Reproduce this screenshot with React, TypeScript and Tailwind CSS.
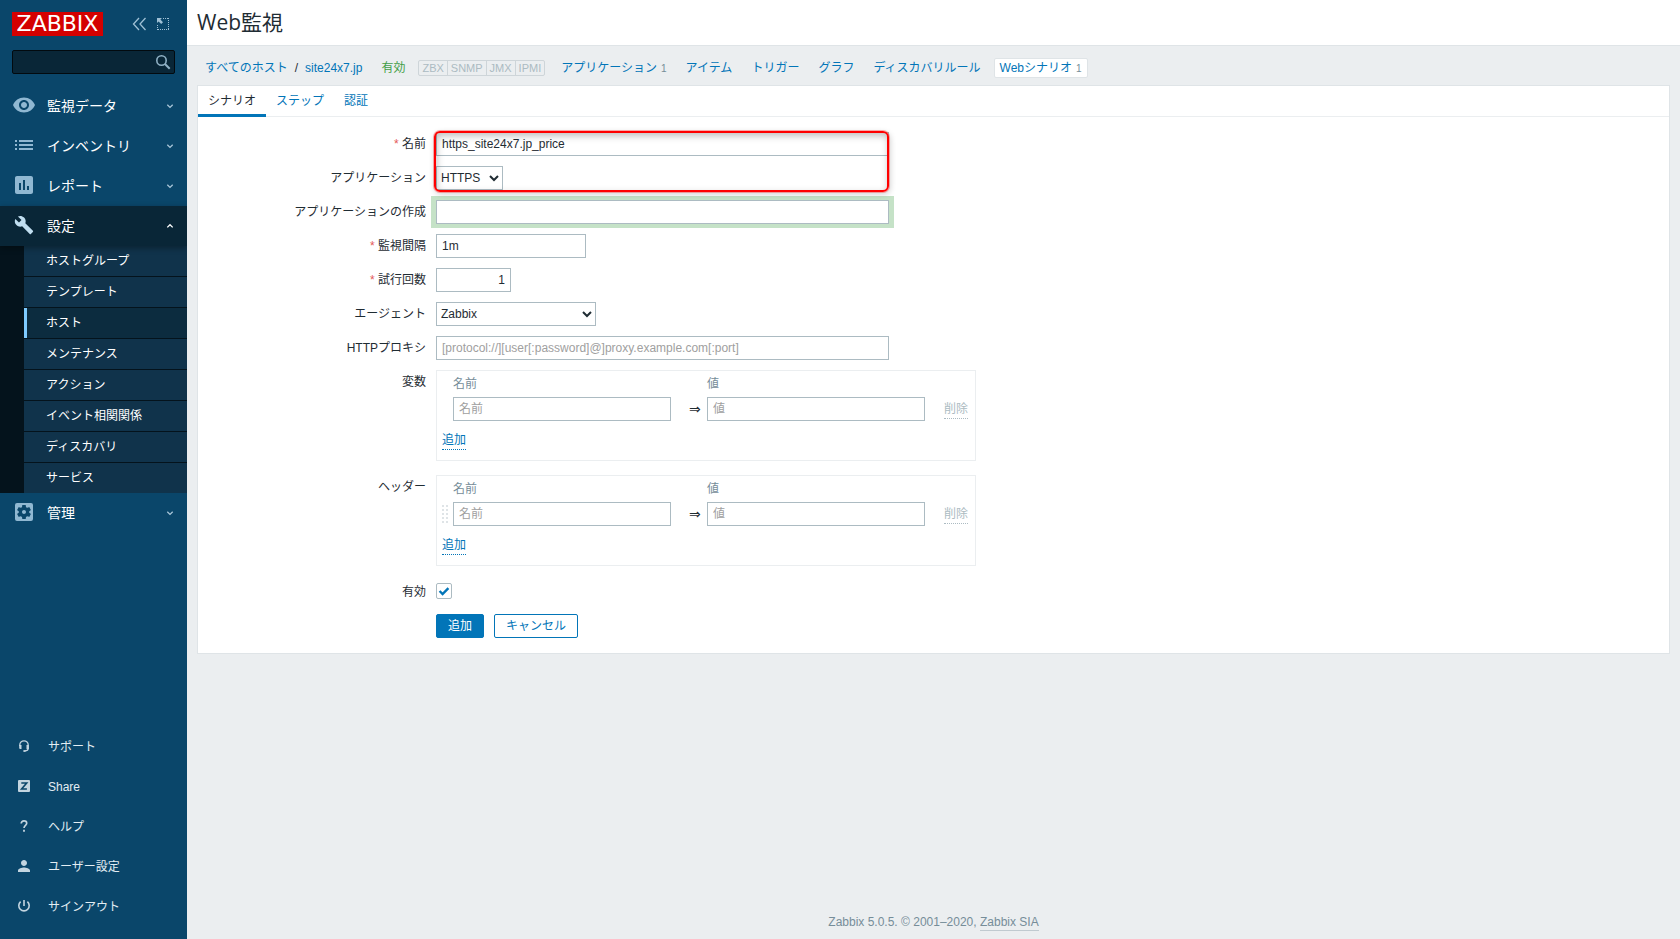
import { useState } from "react";
import type { ComponentType, ReactNode } from "react";
import {
  MdAssessment,
  MdBuild,
  MdList,
  MdPerson,
  MdRemoveRedEye,
  MdSettingsApplications,
} from "react-icons/md";
import clsx from "clsx";

type IconProps = { className?: string };

function HeadsetIcon({ className }: IconProps) {
  return (
    <svg viewBox="0 0 18 18" className={className} fill="none" stroke="currentColor">
      <path d="M4.8 9V8a4.2 4.2 0 0 1 8.4 0v3.6c0 1.6-1.2 2.4-3.4 2.4" strokeWidth="1.3" />
      <path d="M4.2 8h2.3v4H5.3a1.1 1.1 0 0 1-1.1-1.1zM11.5 8h2.3v4h-2.3z" fill="currentColor" stroke="none" />
      <path d="M8.4 14h2" strokeWidth="1.8" />
    </svg>
  );
}

function ShareIcon({ className }: IconProps) {
  return (
    <svg viewBox="0 0 18 18" className={className}>
      <rect x="3" y="3" width="12" height="12" rx="1" fill="currentColor" />
      <path d="M6.3 6h5.4L6.6 12h5.3" fill="none" stroke="#0a466a" strokeWidth="1.6" />
    </svg>
  );
}

function HelpIcon({ className }: IconProps) {
  return (
    <svg viewBox="0 0 18 18" className={className} fill="none" stroke="currentColor" strokeWidth="1.7">
      <path d="M6.2 6.6C6.2 4.8 7.4 3.9 9 3.9s2.7.9 2.7 2.3c0 2-2.7 2.2-2.7 4.8" />
      <path d="M8.1 13.8h1.8" strokeWidth="1.9" />
    </svg>
  );
}

function PowerIcon({ className }: IconProps) {
  return (
    <svg viewBox="0 0 18 18" className={className} fill="none" stroke="currentColor" strokeWidth="1.6">
      <path d="M9 3v6M5.6 4.7a5.2 5.2 0 1 0 6.8 0" />
    </svg>
  );
}

function Chevron({ up }: { up?: boolean }) {
  return (
    <svg viewBox="0 0 8 8" className="size-2" fill="none" stroke="currentColor" strokeWidth="1.3">
      {up ? <path d="M1.3 5.4 4 2.7l2.7 2.7" /> : <path d="M1.3 2.7 4 5.4l2.7-2.7" />}
    </svg>
  );
}

const mainMenu: { name: string; icon: ComponentType<IconProps>; items?: string[] }[] = [
  { name: "監視データ", icon: MdRemoveRedEye },
  { name: "インベントリ", icon: MdList },
  { name: "レポート", icon: MdAssessment },
  {
    name: "設定",
    icon: MdBuild,
    items: [
      "ホストグループ",
      "テンプレート",
      "ホスト",
      "メンテナンス",
      "アクション",
      "イベント相関関係",
      "ディスカバリ",
      "サービス",
    ],
  },
  { name: "管理", icon: MdSettingsApplications },
];

const userMenu = [
  { name: "サポート", icon: HeadsetIcon },
  { name: "Share", icon: ShareIcon },
  { name: "ヘルプ", icon: HelpIcon },
  { name: "ユーザー設定", icon: MdPerson },
  { name: "サインアウト", icon: PowerIcon },
];

const hostLinks = [
  { name: "アプリケーション", count: 1 },
  { name: "アイテム" },
  { name: "トリガー" },
  { name: "グラフ" },
  { name: "ディスカバリルール" },
  { name: "Webシナリオ", count: 1, active: true },
];

function Sidebar() {
  return (
    <aside className="flex w-[187px] shrink-0 flex-col overflow-hidden bg-[#0a466a] text-white">
      <div className="flex h-[50px] items-start pt-3 pr-[17px] pl-3 text-[#9fc0d5]">
        <a href="#" className="flex h-6 w-[91px] items-center justify-center bg-[#d40000] font-['DejaVu_Sans'] text-[22px] leading-6 text-white">
          ZABBIX
        </a>
        <button type="button" aria-label="Collapse sidebar" className="ml-auto">
          <svg viewBox="0 0 16 16" className="mt-1 size-4" fill="none" stroke="currentColor" strokeWidth="1.3">
            <path d="M7 2 1.5 8 7 14M13.500 2 8 8l5.500 6" />
          </svg>
        </button>
        <button type="button" aria-label="Hide sidebar" className="ml-2">
          <svg viewBox="0 0 14 14" className="mt-[5px] size-3.5" fill="none" stroke="currentColor">
            <path d="M7 1.5h6M12.5 1v12M13 12.5H1M1.5 13V7" strokeDasharray="1 1" />
            <path d="M1 1h5L4.400 2.600 7 5.200 5.200 7 2.600 4.400 1 6z" fill="currentColor" stroke="none" />
          </svg>
        </button>
      </div>

      <form className="mx-3 mb-3 flex h-6 items-center rounded-xs border border-[#020a0f] bg-[#092637]">
        <input aria-label="Search" className="h-full w-0 flex-1 bg-transparent px-1.5 text-xs text-white outline-none" />
        <button type="button" aria-label="Search" className="pr-[3px] text-[#8fb0c4]">
          <svg viewBox="0 0 16 16" className="size-4" fill="none" stroke="currentColor" strokeWidth="1.6">
            <circle cx="6.5" cy="6.5" r="4.7" />
            <path d="m10 10 4.700 4.700" strokeWidth="2" />
          </svg>
        </button>
      </form>

      <nav>
        {mainMenu.map((item) => (
          <div key={item.name}>
            <a
              href="#"
              className={clsx(
                "flex h-10 items-center gap-[11px] pr-[13px] pl-3 text-sm",
                item.items && "relative bg-[#092637] shadow-[0_2px_6px_rgba(0,0,0,0.35)]"
              )}
            >
              <span className="mb-0.5 flex size-6 items-center justify-center">
                <item.icon className={item.items ? "size-5 text-[#c0def0]" : "size-6 text-[#90b8d2]"} />
              </span>
              <span className="flex-1">{item.name}</span>
              <span className={item.items ? "text-white" : "text-[#a9c6d8]"}>
                <Chevron up={!!item.items} />
              </span>
            </a>
            {item.items && (
              <ul className="divide-y divide-[#04131c] bg-[#04131c] pl-6">
                {item.items.map((name) => (
                  <li key={name}>
                    <a
                      href="#"
                      className={clsx(
                        "block h-[30px] border-l-3 pl-[19px] text-xs leading-[31px]",
                        name === "ホスト" ? "border-[#7ecbff] bg-[#0c2c3f]" : "border-[#10334b] bg-[#10334b]"
                      )}
                    >
                      {name}
                    </a>
                  </li>
                ))}
              </ul>
            )}
          </div>
        ))}
      </nav>

      <nav className="mt-auto pb-[13px]">
        {userMenu.map((item) => (
          <a key={item.name} href="#" className="flex h-10 items-center gap-[15px] pl-[15px] text-xs text-[#e3edf3]">
            <item.icon className="size-[18px] text-[#c3d5e0]" />
            <span className="pt-0.5">{item.name}</span>
          </a>
        ))}
      </nav>
    </aside>
  );
}

function HostNav() {
  return (
    <nav className="flex h-[39px] items-start gap-[7px] pt-3 pl-2 leading-[19px] text-[#0275b8]">
      <div className="flex h-5 items-center">
        <a href="#">すべてのホスト</a>
        <span className="px-[7px] text-[#1f2c33]">/</span>
        <a href="#">site24x7.jp</a>
        <span className="ml-[19px] text-[#429e47]">有効</span>
        <span className="mr-[3px] ml-[13px] flex divide-x divide-[#ced5d9] rounded-xs border border-[#ced5d9] text-[11px] leading-[14px] text-[#acbbc2]">
          {["ZBX", "SNMP", "JMX", "IPMI"].map((name) => (
            <span key={name} className="px-[3px]">{name}</span>
          ))}
        </span>
      </div>
      {hostLinks.map((link) => (
        <a
          key={link.name}
          href="#"
          className={clsx(
            "h-5 rounded-xs border px-[5px]",
            link.active ? "border-[#dfe4e7] bg-white" : "border-transparent"
          )}
        >
          {link.name}
          {link.count && <sup className="static ml-1 align-baseline text-[10px] text-[#768d99]">{link.count}</sup>}
        </a>
      ))}
    </nav>
  );
}

const field = "h-6 border border-[#acbbc2] bg-white text-[#1f2c33] outline-none placeholder:text-[#a0a0a0]";

function Row({ label, id, required, children }: { label: string; id?: string; required?: boolean; children: ReactNode }) {
  return (
    <div className="flex gap-2.5">
      <label htmlFor={id} className="h-6 w-[228px] shrink-0 text-right leading-[25px]">
        {required && <span className="text-[#e45959]">* </span>}
        {label}
      </label>
      {children}
    </div>
  );
}

function PairTable({ label, draggable }: { label: string; draggable?: boolean }) {
  return (
    <Row label={label}>
      <div className="mb-1 h-[91px] w-[540px] border border-[#ebeef0] pl-[5px]">
        <table className="table-fixed border-collapse text-left">
          <thead>
            <tr className="h-[26px] text-[#768d99]">
              <th className="w-[11px]" />
              <th className="w-[218px] font-normal">名前</th>
              <th className="w-9" />
              <th className="w-[218px] font-normal">値</th>
              <th className="w-[43px]" />
            </tr>
          </thead>
          <tbody>
            <tr>
              <td>
                {draggable && (
                  <svg viewBox="0 0 6 18" className="h-[18px] w-1.5" fill="#dfe4e7">
                    {[0, 4, 8, 12, 16].map((y) => (
                      <g key={y}>
                        <rect x="0" y={y} width="2" height="2" />
                        <rect x="4" y={y} width="2" height="2" />
                      </g>
                    ))}
                  </svg>
                )}
              </td>
              <td>
                <input aria-label={`${label} 名前`} placeholder="名前" className={clsx(field, "block w-full px-[5px]")} />
              </td>
              <td className="pl-[18px] font-['DejaVu_Sans'] text-sm leading-4">⇒</td>
              <td>
                <input aria-label={`${label} 値`} placeholder="値" className={clsx(field, "block w-full px-[5px]")} />
              </td>
              <td className="pl-[19px]">
                <button type="button" disabled className="block border-b border-dotted border-[#acbbc2] leading-[18px] text-[#acbbc2]">
                  削除
                </button>
              </td>
            </tr>
          </tbody>
        </table>
        <button type="button" className="mt-2.5 block border-b border-dotted border-[#0275b8] leading-[18px] text-[#0275b8]">
          追加
        </button>
      </div>
    </Row>
  );
}

function ScenarioForm() {
  const [name, setName] = useState("https_site24x7.jp_price");
  const [delay, setDelay] = useState("1m");
  const [retries, setRetries] = useState("1");
  const [enabled, setEnabled] = useState(true);

  return (
    <form className="flex flex-col gap-2.5 py-[15px] text-[#1f2c33]">
      <div className="relative flex flex-col gap-2.5">
        <Row label="名前" id="name" required>
          <input id="name" value={name} onChange={(e) => setName(e.target.value)} className={clsx(field, "w-[453px] px-[5px]")} />
        </Row>
        <Row label="アプリケーション" id="application">
          <select id="application" className={clsx(field, "w-[67px]")}>
            <option>HTTPS</option>
          </select>
        </Row>
        {/* highlight over the first two fields */}
        <div className="pointer-events-none absolute -top-px left-[236px] h-[61px] w-[455px] rounded-md border-2 border-[#ff0000] shadow-[0_0_0_1px_rgba(255,60,60,0.4),1px_2px_6px_rgba(0,0,0,0.2),inset_1px_3px_7px_rgba(0,0,0,0.25)]" />
      </div>
      <Row label="アプリケーションの作成" id="new-application">
        <input
          id="new-application"
          className={clsx(field, "w-[453px] px-[5px] shadow-[1px_0_0_4px_#c5e2c7,-1px_0_0_4px_#c5e2c7]")}
        />
      </Row>
      <Row label="監視間隔" id="delay" required>
        <input id="delay" value={delay} onChange={(e) => setDelay(e.target.value)} className={clsx(field, "w-[150px] px-[5px]")} />
      </Row>
      <Row label="試行回数" id="retries" required>
        <input
          id="retries"
          value={retries}
          onChange={(e) => setRetries(e.target.value)}
          className={clsx(field, "w-[75px] px-[5px] text-right")}
        />
      </Row>
      <Row label="エージェント" id="agent">
        <select id="agent" className={clsx(field, "w-40")}>
          <option>Zabbix</option>
        </select>
      </Row>
      <Row label="HTTPプロキシ" id="proxy">
        <input
          id="proxy"
          placeholder="[protocol://][user[:password]@]proxy.example.com[:port]"
          className={clsx(field, "w-[453px] px-[5px]")}
        />
      </Row>
      <PairTable label="変数" />
      <PairTable label="ヘッダー" draggable />
      <Row label="有効" id="enabled">
        <span className="relative mt-[3px] mb-[5px] size-4">
          <input
            id="enabled"
            type="checkbox"
            checked={enabled}
            onChange={(e) => setEnabled(e.target.checked)}
            className="block size-4 appearance-none rounded-xs border border-[#acbbc2] bg-white"
          />
          {enabled && (
            <svg viewBox="0 0 16 16" className="pointer-events-none absolute inset-0 size-4" fill="none" stroke="#0275b8" strokeWidth="2.4">
              <path d="m3.6 8 3 3 5.800-5.800" />
            </svg>
          )}
        </span>
      </Row>
      <div className="flex gap-2.5 pl-[238px]">
        <button type="button" className="h-6 rounded-xs border border-[#0275b8] bg-[#0275b8] px-[11px] text-white">追加</button>
        <button type="button" className="h-6 rounded-xs border border-[#0275b8] bg-white px-[11px] text-[#0275b8]">キャンセル</button>
      </div>
    </form>
  );
}

export default function App() {
  return (
    <div className="flex min-h-screen bg-[#ebeef0] font-['Liberation_Sans','Noto_Sans_CJK_JP',sans-serif] text-xs">
      <Sidebar />
      <div className="flex min-w-0 flex-1 flex-col">
        <header className="h-[46px] border-b border-[#dfe4e7] bg-white pl-2.5">
          <h1 className="font-['Open_Sans','Noto_Sans_CJK_JP',sans-serif] text-[21px] leading-[44px] text-[#1f2c33]">Web監視</h1>
        </header>
        <main className="px-2.5">
          <HostNav />
          <section className="border border-[#dfe4e7] bg-white">
            <div className="flex h-[31px] border-b border-[#ebeef0] text-[#0275b8]">
              {["シナリオ", "ステップ", "認証"].map((tab, i) => (
                <a
                  key={tab}
                  href="#"
                  className={clsx("h-[31px] px-2.5 leading-[30px]", i === 0 && "border-b-3 border-[#0275b8] text-[#1f2c33]")}
                >
                  {tab}
                </a>
              ))}
            </div>
            <ScenarioForm />
          </section>
        </main>
        <footer className="mt-auto pb-2 text-center leading-[17px] text-[#768d99]">
          Zabbix 5.0.5. © 2001–2020,{" "}
          <a href="#" className="inline-block border-b border-[#c0cad0] leading-4">Zabbix SIA</a>
        </footer>
      </div>
    </div>
  );
}
